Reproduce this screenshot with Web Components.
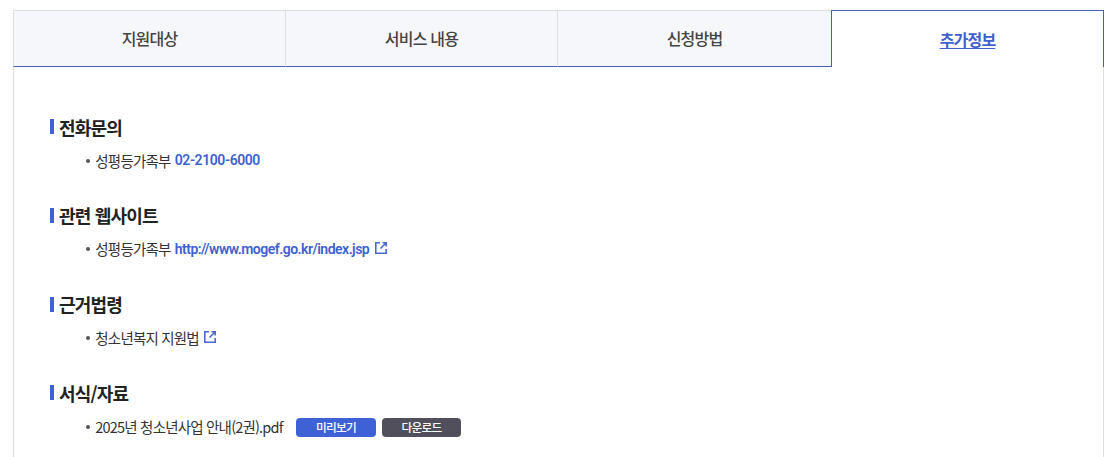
<!DOCTYPE html>
<html lang="ko">
<head>
<meta charset="UTF-8">
<title>추가정보</title>
<style>
    body { margin: 0; height: 457px; overflow: hidden; background: #fff; color: #333; font-family: "Noto Sans CJK KR", sans-serif; letter-spacing: -0.05em; }
</style>
</head>
<body>

<info-panel>
    <tab-bar slot="tabs">
        <tab-item>지원대상</tab-item>
        <tab-item>서비스 내용</tab-item>
        <tab-item>신청방법</tab-item>
        <tab-item active>추가정보</tab-item>
    </tab-bar>
    <info-section titulo="전화문의">
        <info-row>성평등가족부 <info-link>02-2100-6000</info-link></info-row>
    </info-section>
    <info-section titulo="관련 웹사이트">
        <info-row>성평등가족부 <info-link class="url">http://www.mogef.go.kr/index.jsp</info-link><external-icon></external-icon></info-row>
    </info-section>
    <info-section titulo="근거법령">
        <info-row>청소년복지 지원법<external-icon></external-icon></info-row>
    </info-section>
    <info-section titulo="서식/자료">
        <info-row>2025년 청소년사업 안내(2권).pdf<file-button color="#3e61d6" ancho="80">미리보기</file-button><file-button color="#514f5c" ancho="79">다운로드</file-button></info-row>
    </info-section>
</info-panel>

<script>
class InfoPanel extends HTMLElement {
    constructor() {
        super();
        this.attachShadow({ mode: "open" });
    }

    connectedCallback() {
        this.shadowRoot.innerHTML = `
            <style>
                :host { display: block; width: 1091px; margin: 0 0 0 13px; padding-top: 10px; }
                .contenido { box-sizing: border-box; height: 390px; padding: 46.7px 36px 0; border: solid #dcdee2; border-width: 0 1px; overflow: hidden; }
            </style>
            <slot name="tabs"></slot>
            <div class="contenido"><slot></slot></div>
        `;
    }
}

class TabBar extends HTMLElement {
    constructor() {
        super();
        this.attachShadow({ mode: "open" });
    }

    connectedCallback() {
        this.shadowRoot.innerHTML = `
            <style>
                :host { display: grid; grid-template-columns: 272px 272px 274px 273px; height: 57px; }
            </style>
            <slot></slot>
        `;
    }
}

class TabItem extends HTMLElement {
    constructor() {
        super();
        this.attachShadow({ mode: "open" });
    }

    connectedCallback() {
        this.shadowRoot.innerHTML = `
            <style>
                :host { display: flex; box-sizing: border-box; align-items: center; justify-content: center; padding-bottom: 2px; background: #f5f7fb; border: 1px solid #dcdee2; border-right: 0; border-bottom-color: #4561b5; font-size: 16px; font-weight: 500; line-height: 24px; color: #444; }
                :host([active]) { padding-bottom: 0; background: #fff; border: 1px solid #4561b5; border-bottom: 0; color: #3e61d0; font-weight: 700; }
                :host([active]) span { text-decoration: underline; text-underline-offset: 2px; text-decoration-thickness: 1px; }
            </style>
            <span><slot></slot></span>
        `;
    }
}

class InfoSection extends HTMLElement {
    constructor() {
        super();
        this.attachShadow({ mode: "open" });
    }

    connectedCallback() {
        let titulo = this.getAttribute("titulo") || "";

        this.shadowRoot.innerHTML = `
            <style>
                :host { display: block; height: 88.7px; }
                :host(:last-child) { height: 70px; }
                h3 { display: flex; align-items: center; gap: 5px; height: 26px; margin: 0; font-size: 18px; font-weight: 700; line-height: 26px; color: #222; }
                h3::before { content: ""; width: 4px; height: 15px; background: #3e61d6; }
            </style>
            <h3>${titulo}</h3>
            <slot></slot>
        `;
    }
}

class InfoRow extends HTMLElement {
    constructor() {
        super();
        this.attachShadow({ mode: "open" });
    }

    connectedCallback() {
        this.shadowRoot.innerHTML = `
            <style>
                :host { display: flex; align-items: center; height: 22px; margin-top: 10px; padding-left: 36px; font-size: 14.5px; line-height: 22px; color: #333; white-space: nowrap; }
                i { width: 4px; height: 4px; margin-right: 5.3px; border-radius: 50%; background: #555; }
            </style>
            <i></i><slot></slot>
        `;
    }
}

class InfoLink extends HTMLElement {
    constructor() {
        super();
        this.attachShadow({ mode: "open" });
    }

    connectedCallback() {
        this.shadowRoot.innerHTML = `
            <style>
                :host { display: block; margin: -2px 0 0 4.2px; font-family: Roboto, sans-serif; font-size: 14px; font-weight: 600; letter-spacing: -0.42px; color: #3e61d0; }
                :host(.url) { margin-top: -1px; letter-spacing: -0.51px; }
            </style>
            <slot></slot>
        `;
    }
}

class ExternalIcon extends HTMLElement {
    constructor() {
        super();
        this.attachShadow({ mode: "open" });
    }

    connectedCallback() {
        this.shadowRoot.innerHTML = `
            <style>
                :host { display: block; width: 12px; height: 12px; margin: -3px 0 0 5.6px; }
                svg { display: block; }
            </style>
            <svg width="12" height="12" viewBox="0 0 12 12" fill="none" stroke="#4b69cf" stroke-width="1.6">
                <path d="M5 .8H.8v10.4h10.4V7"/>
                <path d="M7.5 .8h3.7v3.7M11 1L5.5 6.5"/>
            </svg>
        `;
    }
}

class FileButton extends HTMLElement {
    constructor() {
        super();
        this.attachShadow({ mode: "open" });
    }

    connectedCallback() {
        let color = this.getAttribute("color");
        let ancho = this.getAttribute("ancho");

        this.shadowRoot.innerHTML = `
            <style>
                :host { display: block; width: ${ancho}px; height: 19px; margin: 1px 0 0 6px; border-radius: 4px; background: ${color}; color: #fff; font-size: 11.7px; font-weight: 500; line-height: 18px; text-align: center; }
                :host(:first-of-type) { margin-left: 13.3px; }
            </style>
            <slot></slot>
        `;
    }
}

customElements.define("info-panel", InfoPanel);
customElements.define("tab-bar", TabBar);
customElements.define("tab-item", TabItem);
customElements.define("info-section", InfoSection);
customElements.define("info-row", InfoRow);
customElements.define("info-link", InfoLink);
customElements.define("external-icon", ExternalIcon);
customElements.define("file-button", FileButton);
</script>
</body>
</html>
